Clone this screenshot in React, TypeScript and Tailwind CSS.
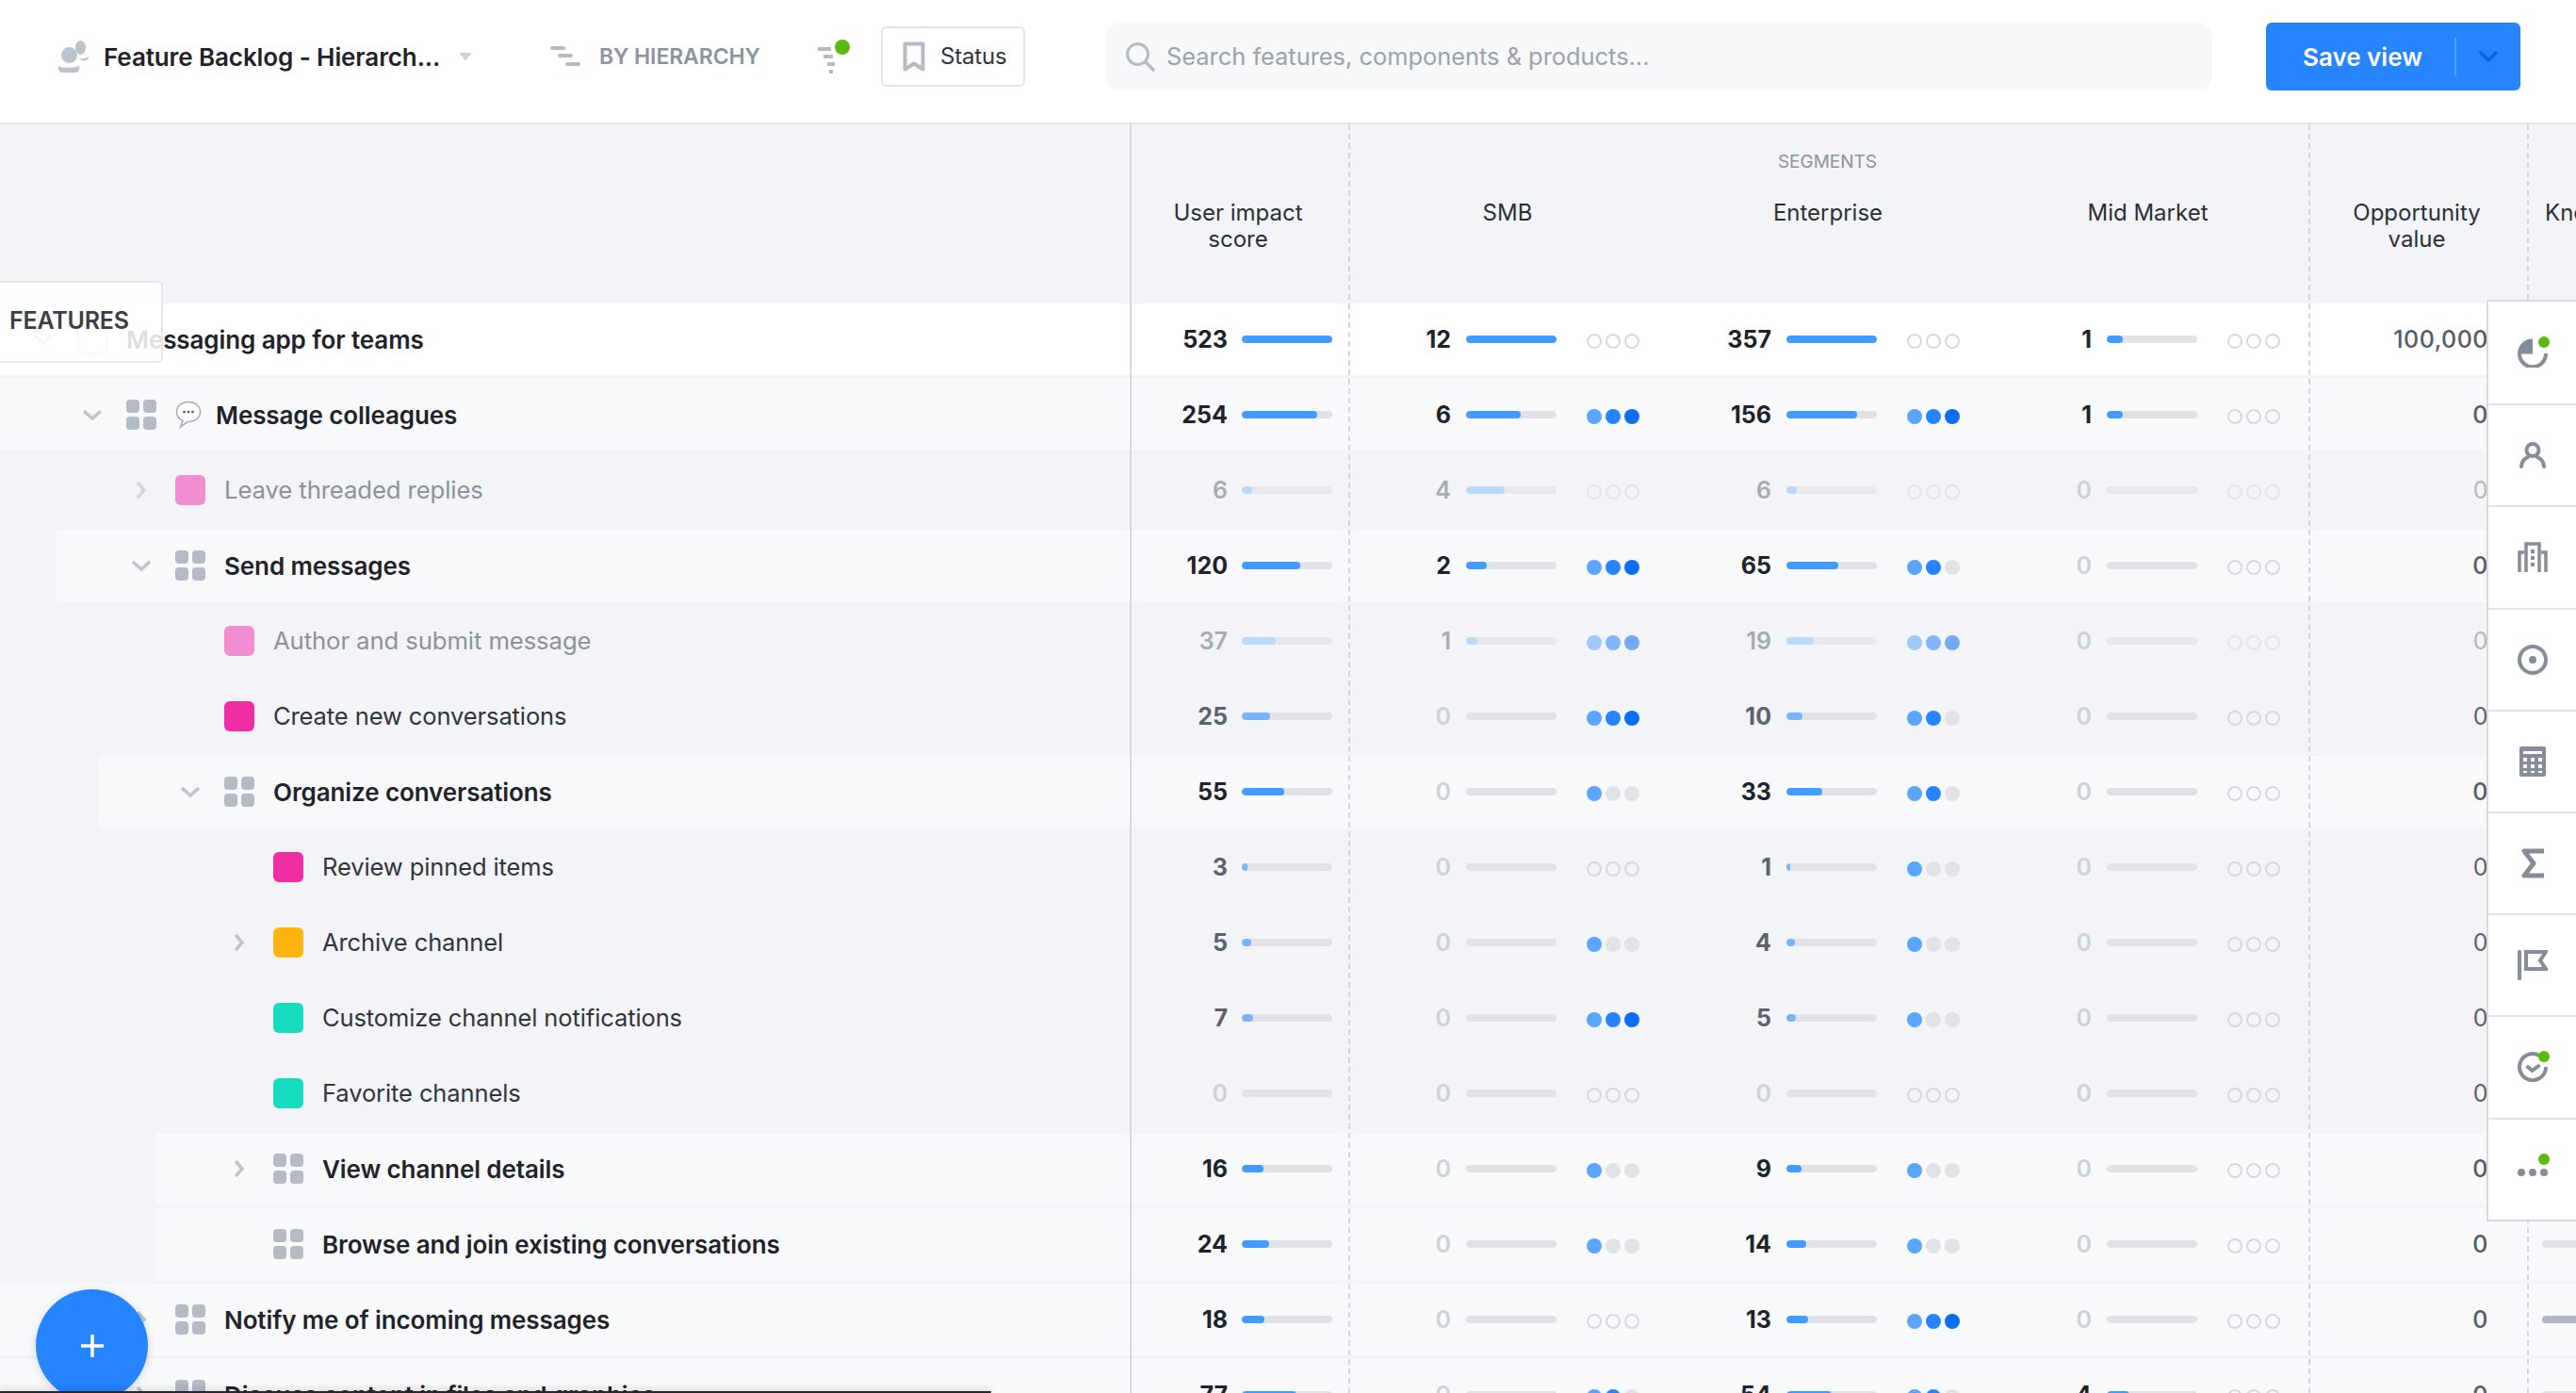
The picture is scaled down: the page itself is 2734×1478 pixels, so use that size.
import React from "react";

const DASH =
  "bg-[linear-gradient(#d3d7dc_62%,transparent_62%)] bg-[length:2px_10px] bg-repeat-y bg-[position:right_top]";
const GRID =
  "grid grid-cols-[1201px_232px_340px_340px_339px_232px_1fr]";

type Dots = 0 | 1 | 2 | 3;
type Seg = [string, number, Dots];
type Row = {
  label: string;
  level: number;
  kind: "group" | "leaf" | "dim" | "root";
  swatch?: string;
  chevron?: "down" | "right";
  emoji?: boolean;
  shade: number;
  impact: [string, number];
  segs: [Seg, Seg, Seg];
  opp: string;
  next?: string;
};

const zero: Seg = ["0", 0, 0];

const rows: Row[] = [
  { label: "Messaging app for teams", level: 0, kind: "root", chevron: "down", shade: 0, impact: ["523", 100], segs: [["12", 100, 0], ["357", 100, 0], ["1", 18, 0]], opp: "100,000" },
  { label: "Message colleagues", level: 1, kind: "group", chevron: "down", emoji: true, shade: 0, impact: ["254", 83], segs: [["6", 60, 3], ["156", 78, 3], ["1", 18, 0]], opp: "0" },
  { label: "Leave threaded replies", level: 2, kind: "dim", swatch: "bg-[#f08ecf]", chevron: "right", shade: 0, impact: ["6", 11], segs: [["4", 43, 0], ["6", 11, 0], zero], opp: "0" },
  { label: "Send messages", level: 2, kind: "group", chevron: "down", shade: 60, impact: ["120", 65], segs: [["2", 23, 3], ["65", 57, 2], zero], opp: "0" },
  { label: "Author and submit message", level: 3, kind: "dim", swatch: "bg-[#f08ecf]", shade: 0, impact: ["37", 38], segs: [["1", 12, 3], ["19", 30, 3], zero], opp: "0" },
  { label: "Create new conversations", level: 3, kind: "leaf", swatch: "bg-[#ef2ea6]", shade: 0, impact: ["25", 31], segs: [["0", 0, 3], ["10", 18, 2], zero], opp: "0" },
  { label: "Organize conversations", level: 3, kind: "group", chevron: "down", shade: 105, impact: ["55", 47], segs: [["0", 0, 1], ["33", 40, 2], zero], opp: "0" },
  { label: "Review pinned items", level: 4, kind: "leaf", swatch: "bg-[#ef2ea6]", shade: 0, impact: ["3", 6], segs: [["0", 0, 0], ["1", 4, 1], zero], opp: "0" },
  { label: "Archive channel", level: 4, kind: "leaf", swatch: "bg-[#ffb412]", chevron: "right", shade: 0, impact: ["5", 10], segs: [["0", 0, 1], ["4", 9, 1], zero], opp: "0" },
  { label: "Customize channel notifications", level: 4, kind: "leaf", swatch: "bg-[#17dcc0]", shade: 0, impact: ["7", 13], segs: [["0", 0, 3], ["5", 10, 1], zero], opp: "0" },
  { label: "Favorite channels", level: 4, kind: "leaf", swatch: "bg-[#17dcc0]", shade: 0, impact: ["0", 0], segs: [["0", 0, 0], ["0", 0, 0], zero], opp: "0" },
  { label: "View channel details", level: 4, kind: "group", chevron: "right", shade: 165, impact: ["16", 24], segs: [["0", 0, 1], ["9", 17, 1], zero], opp: "0" },
  { label: "Browse and join existing conversations", level: 4, kind: "group", shade: 165, impact: ["24", 30], segs: [["0", 0, 1], ["14", 22, 1], zero], opp: "0", next: "bg-[#dfe2e6]" },
  { label: "Notify me of incoming messages", level: 2, kind: "group", chevron: "right", shade: 0, impact: ["18", 25], segs: [["0", 0, 0], ["13", 24, 3], zero], opp: "0", next: "bg-[#b3b9c2]" },
  { label: "Discuss content in files and graphics", level: 2, kind: "group", chevron: "right", shade: 0, impact: ["77", 60], segs: [["0", 0, 2], ["54", 50, 2], ["4", 25, 0]], opp: "0", next: "bg-[#dfe2e6]" },
];

function GridIcon() {
  return (
    <div className="grid h-8 w-8 shrink-0 grid-cols-2 gap-[4px]">
      <span className="rounded-[4px] bg-[#b4bbc5]" />
      <span className="rounded-[4px] bg-[#b4bbc5]" />
      <span className="rounded-[4px] bg-[#b4bbc5]" />
      <span className="rounded-[4px] bg-[#b4bbc5]" />
    </div>
  );
}

function Chevron({ dir, light }: { dir: "down" | "right"; light?: boolean }) {
  return (
    <svg width="20" height="20" viewBox="0 0 20 20" fill="none" className={light ? "opacity-60" : ""}>
      {dir === "down" ? (
        <path d="M1 6l9 8 9-8" stroke="#bfc5cd" strokeWidth="3.6" />
      ) : (
        <path d="M6 2l7 8-7 8" stroke="#bfc5cd" strokeWidth="3.6" />
      )}
    </svg>
  );
}

function Bubble() {
  return (
    <svg width="28" height="30" viewBox="0 0 28 30" className="shrink-0">
      <path
        d="M14 1.500C7 1.500 1.500 6 1.500 12c0 4 2.500 7.500 6.500 9.300L5.500 28 13 22.500h1c7 0 12.500-4.500 12.500-10.500S21 1.500 14 1.500z"
        fill="#fff"
        stroke="#a9afb8"
        strokeWidth="1.600"
      />
      <circle cx="9.500" cy="12" r="1.300" fill="#4a4f57" />
      <circle cx="14" cy="12" r="1.300" fill="#4a4f57" />
      <circle cx="18.500" cy="12" r="1.300" fill="#4a4f57" />
    </svg>
  );
}

function DotSet({ n, faded }: { n: Dots; faded: boolean }) {
  const filled = ["bg-[#5aa5ff]", "bg-[#2684ff]", "bg-[#0b6ef2]"];
  return (
    <div className={`ml-8 mt-[4px] flex w-[56px] shrink-0 gap-[4px] ${faded ? "opacity-55" : ""}`}>
      {[0, 1, 2].map((i) => {
        let cls = "border-2 border-[#d5d9de]";
        if (n > 0) cls = i < n ? filled[i] : "bg-[#dfe2e6]";
        return <span key={i} className={`h-4 w-4 rounded-full ${cls}`} />;
      })}
    </div>
  );
}

function Bar({ pct, kind }: { pct: number; kind: Row["kind"] }) {
  const fill =
    kind === "dim" ? "bg-[#b9d9fb]" : kind === "leaf" ? "bg-[#7ab4f8]" : "bg-[#429bff]";
  return (
    <div className={`h-2 w-24 shrink-0 overflow-hidden rounded-full ${kind === "dim" ? "bg-[#e6e8ec]" : "bg-[#dfe3e6]"}`}>
      {pct > 0 && <div className={`h-full rounded-full ${fill}`} style={{ width: `${pct}%` }} />}
    </div>
  );
}

function numClass(v: string, kind: Row["kind"]) {
  if (v === "0") return "font-semibold text-[#cdd2d8]";
  if (kind === "dim") return "font-semibold text-[#a6acb3]";
  if (kind === "leaf") return "font-bold text-[#5b626c]";
  return "font-bold text-[#1f2329]";
}

function RowView({ r }: { r: Row }) {
  const rowBg = r.kind === "root" ? "#ffffff" : r.kind === "group" ? "#f8f9fb" : "#f2f4f7";
  const labelCls =
    r.kind === "group" || r.kind === "root"
      ? "text-[26px] font-semibold text-[#1f2329]"
      : r.kind === "dim"
        ? "text-[25.7px] text-[#8b929c]"
        : "text-[25.5px] text-[#30353c]";
  return (
    <div
      className={`${GRID} h-20 shadow-[inset_0_-4px_0_#f2f4f7]`}
      style={{ backgroundImage: `linear-gradient(to right, #f2f4f7 ${r.shade}px, ${rowBg} ${r.shade}px)` }}
    >
      <div
        className="flex items-center border-r-2 border-[#d5d9de] pb-1"
        style={{ paddingLeft: 36 + 52 * r.level }}
      >
        <div className="mr-[26px] flex w-5 shrink-0 justify-center">
          {r.chevron && <Chevron dir={r.chevron} light={r.kind === "dim"} />}
        </div>
        {r.swatch ? (
          <span className={`h-8 w-8 shrink-0 rounded-[6px] ${r.swatch}`} />
        ) : r.kind === "root" ? (
          <span className="h-8 w-8 shrink-0 rounded-[6px] border-2 border-[#c9ced5]" />
        ) : (
          <GridIcon />
        )}
        {r.emoji && (
          <span className="ml-5">
            <Bubble />
          </span>
        )}
        <span className={`${r.emoji ? "ml-[15px]" : "ml-5"} whitespace-nowrap tracking-[-0.1px] ${labelCls}`}>
          {r.label}
        </span>
      </div>
      <div className={`flex items-center pb-1 ${DASH}`}>
        <span className={`mt-[1px] w-[102px] shrink-0 text-right text-[25px] ${numClass(r.impact[0], r.kind)}`}>{r.impact[0]}</span>
        <div className="ml-[15px]">
          <Bar pct={r.impact[1]} kind={r.kind} />
        </div>
      </div>
      {r.segs.map((s, i) => (
        <div key={i} className={`flex items-center pb-1 ${i === 2 ? DASH : ""}`}>
          <span className={`mt-[1px] w-[107px] shrink-0 text-right text-[25px] ${numClass(s[0], r.kind)}`}>{s[0]}</span>
          <div className="ml-4">
            <Bar pct={s[1]} kind={r.kind} />
          </div>
          <DotSet n={s[2]} faded={r.kind === "dim"} />
        </div>
      ))}
      <div className={`flex items-center justify-end pb-1 pr-[43px] ${DASH}`}>
        <span className={`mt-[1px] text-[25px] tracking-[0.5px] ${r.kind === "dim" ? "font-normal text-[#b3b8bf]" : r.kind === "leaf" ? "font-normal text-[#5b626c]" : "font-medium text-[#555c66]"}`}>
          {r.opp}
        </span>
      </div>
      <div className="flex items-center pb-1 pl-[14px]">
        {r.next && <span className={`h-2 w-24 rounded-full ${r.next}`} />}
      </div>
    </div>
  );
}

function Cell({ children, dot }: { children: React.ReactNode; dot?: boolean }) {
  return (
    <div className="relative flex h-[108.2px] items-center justify-center border-t-2 border-[#dfe3e8] first:border-t-0">
      <span className="relative flex h-9 w-9 items-center justify-center">
        {children}
        {dot && <span className="absolute right-0 top-[1px] h-3 w-3 rounded-full bg-[#5cb90d]" />}
      </span>
    </div>
  );
}

const G = "#858d99";

export default function App() {
  return (
    <div className="relative h-[1478px] w-[2734px] overflow-hidden bg-[#f2f4f7] [font-family:Inter,sans-serif]">
      <header className="flex h-[132px] items-center border-b-2 border-[#e3e6ea] bg-white pb-[10px] pl-[62px]">
        <svg width="32" height="34" viewBox="0 0 32 34" className="shrink-0">
          <circle cx="11.500" cy="15.500" r="8.500" fill="#bcc3cd" />
          <path d="M0 27c3 1.500 6 1.800 11 1.800s8-.5 11-2c1 3.500-1 7.200-4 7.200H4c-3 0-5-3-4-7z" fill="#bcc3cd" />
          <ellipse cx="23.500" cy="7.500" rx="5.500" ry="7.500" fill="#bcc3cd" />
          <path d="M23 19c3 .5 6 0 9-2 .5 3-2 4.500-5 4.500-2 0-4-1-4-2.500z" fill="#bcc3cd" />
        </svg>
        <span className="ml-4 w-[355px] shrink-0 whitespace-nowrap text-[26px] font-semibold tracking-[-0.1px] text-[#1f2329]">
          Feature Backlog - Hierarch...
        </span>
        <svg width="14" height="10" viewBox="0 0 14 10" className="ml-[22px] shrink-0">
          <path d="M1 1.500h12L7 9z" fill="#d0d4da" stroke="#d0d4da" strokeLinejoin="round" />
        </svg>
        <svg width="32" height="22" viewBox="0 0 32 22" className="ml-[83px] shrink-0">
          <rect x="0" y="0" width="16" height="4" rx="2" fill="#b4bbc5" />
          <rect x="8" y="8" width="16" height="4" rx="2" fill="#b4bbc5" />
          <rect x="16" y="17" width="16" height="4" rx="2" fill="#b4bbc5" />
        </svg>
        <span className="ml-5 w-[172px] shrink-0 whitespace-nowrap text-[23px] font-semibold tracking-[-0.1px] text-[#8b939f]">
          BY HIERARCHY
        </span>
        <svg width="36" height="36" viewBox="0 0 36 36" className="ml-[60px] shrink-0">
          <rect x="0" y="8" width="14" height="4" fill="#b4bbc5" />
          <rect x="6" y="16" width="10" height="4" fill="#b4bbc5" />
          <rect x="10" y="24" width="8" height="4" fill="#b4bbc5" />
          <rect x="12" y="32" width="4" height="4" fill="#b4bbc5" />
          <circle cx="26" cy="8" r="8" fill="#5cb90d" />
        </svg>
        <div className="ml-[31px] flex h-16 w-[153px] shrink-0 items-center rounded-md border-2 border-[#e0e4e9] pl-[21px]">
          <svg width="24" height="32" viewBox="0 0 24 32" className="shrink-0">
            <path d="M2.500 2.500h19v27l-9.500-6-9.500 6z" fill="none" stroke="#b4bbc5" strokeWidth="4" strokeLinejoin="round" />
          </svg>
          <span className="ml-4 text-[24px] tracking-[-0.2px] text-[#30353c]">Status</span>
        </div>
        <div className="ml-[85px] flex h-[72px] w-[1175px] shrink-0 items-center rounded-2xl bg-[#f7f8fa] pl-[21px]">
          <svg width="32" height="32" viewBox="0 0 32 32" fill="none" className="shrink-0">
            <circle cx="13.500" cy="13.500" r="11" stroke="#b4bbc5" strokeWidth="3" />
            <path d="M22 22l8 8" stroke="#b4bbc5" strokeWidth="3.500" strokeLinecap="round" />
          </svg>
          <span className="ml-3 whitespace-nowrap text-[25.4px] text-[#9aa2ad]">
            Search features, components &amp; products...
          </span>
        </div>
        <div className="ml-[57px] flex h-[72px] w-[270px] shrink-0 items-center rounded-md bg-[#2684ff] pl-[39px]">
          <span className="w-[161px] shrink-0 whitespace-nowrap text-[26px] font-semibold text-white">Save view</span>
          <span className="h-10 w-[2px] bg-[#5aa2ff]" />
          <svg width="22" height="14" viewBox="0 0 22 14" fill="none" className="ml-[23px]">
            <path d="M2 2l9 9 9-9" stroke="#0f66d9" strokeWidth="3.500" />
          </svg>
        </div>
      </header>

      <div className={`${GRID} h-[190px] text-[24px] leading-[28px] text-[#2a2f36]`}>
        <div className="border-r-2 border-[#d5d9de]" />
        <div className={`pr-[6px] pt-20 text-center ${DASH} bg-[position:right_3px]`}>
          User impact
          <br />
          score
        </div>
        <div className="col-span-3">
          <div className={`h-full ${DASH} bg-[position:right_3px]`}>
            <div className="pr-[6px] pt-[29px] text-center text-[19px] leading-[22px] text-[#8b939f]">SEGMENTS</div>
            <div className="mt-[29px] grid grid-cols-[340px_340px_339px] text-center">
              <div className="pr-[6px]">SMB</div>
              <div className="pr-[6px]">Enterprise</div>
              <div className="pr-[6px]">Mid Market</div>
            </div>
          </div>
        </div>
        <div className={`pr-[6px] pt-20 text-center ${DASH} bg-[position:right_3px]`}>
          Opportunity
          <br />
          value
        </div>
        <div className="overflow-hidden whitespace-nowrap pl-[17px] pt-20">Known</div>
      </div>

      <div>
        {rows.map((r) => (
          <RowView key={r.label} r={r} />
        ))}
      </div>

      {/* FEATURES tab lying over the first row */}
      <div className="absolute left-0 top-[298px] flex h-[87px] w-[173px] items-center rounded-r-md border-2 border-l-0 border-[#e3e6ea] bg-white/85 pb-[1px] pl-[10px]">
        <span className="text-[25px] font-semibold tracking-[-0.2px] text-[#3a3f46]">FEATURES</span>
      </div>

      {/* Right tool rail */}
      <div className="absolute left-[2639px] top-[318px] w-[95px] border-y-2 border-l-2 border-[#d5dae0] bg-white">
        <Cell dot>
          <svg width="32" height="32" viewBox="0 0 32 32" fill="none">
            <path d="M14 3.500A14 14 0 1 0 30 17" stroke={G} strokeWidth="4" />
            <path d="M16 1.500v16H2C2.300 9 8 2 16 1.500z" fill={G} />
          </svg>
        </Cell>
        <Cell>
          <svg width="28" height="28" viewBox="0 0 28 28" fill="none">
            <circle cx="14" cy="8.500" r="6.500" stroke={G} strokeWidth="4" />
            <path d="M2 26c0-5 3-8 7-10M26 26c0-5-3-8-7-10" stroke={G} strokeWidth="4" strokeLinecap="round" />
          </svg>
        </Cell>
        <Cell>
          <svg width="32" height="32" viewBox="0 0 32 32" fill="none">
            <path d="M9 32V2h14v30" stroke={G} strokeWidth="3.500" />
            <path d="M2 32V11h5M30 32V11h-5" stroke={G} strokeWidth="3.500" />
            <rect x="14" y="8" width="4" height="4" fill={G} />
            <rect x="14" y="15" width="4" height="4" fill={G} />
            <rect x="14" y="22" width="4" height="4" fill={G} />
          </svg>
        </Cell>
        <Cell>
          <svg width="32" height="32" viewBox="0 0 32 32" fill="none">
            <circle cx="16" cy="16" r="14" stroke={G} strokeWidth="4" />
            <circle cx="16" cy="16" r="4" fill={G} />
          </svg>
        </Cell>
        <Cell>
          <svg width="28" height="32" viewBox="0 0 28 32" fill={G}>
            <path
              fillRule="evenodd"
              d="M2 0h24a2 2 0 0 1 2 2v28a2 2 0 0 1-2 2H2a2 2 0 0 1-2-2V2a2 2 0 0 1 2-2zM4 5v3h20V5zM4 12v4h4v-4zM12 12v4h4v-4zM20 12v4h4v-4zM4 19v4h4v-4zM12 19v4h4v-4zM20 19v4h4v-4zM4 26v2h4v-2zM12 26v2h4v-2zM20 26v2h4v-2z"
            />
          </svg>
        </Cell>
        <Cell>
          <svg width="24" height="32" viewBox="0 0 24 32" fill="none">
            <path d="M24 3H3l10 13L3 29h21" stroke={G} strokeWidth="5" strokeLinejoin="round" />
          </svg>
        </Cell>
        <Cell>
          <svg width="32" height="32" viewBox="0 0 32 32" fill="none">
            <rect x="0" y="0" width="4" height="32" rx="1.500" fill={G} />
            <path d="M9 2h21l-6 9 6 9H9z" stroke={G} strokeWidth="4" />
          </svg>
        </Cell>
        <Cell dot>
          <svg width="32" height="32" viewBox="0 0 32 32" fill="none">
            <path d="M23 4A14 14 0 1 0 30 16" stroke={G} strokeWidth="4" />
            <path d="M9.500 15l6 5 8-6" stroke={G} strokeWidth="4" />
          </svg>
        </Cell>
        <Cell dot>
          <svg width="32" height="8" viewBox="0 0 32 8" fill={G} className="mt-[6px]">
            <circle cx="4" cy="4" r="4" />
            <circle cx="16" cy="4" r="4" />
            <circle cx="28" cy="4" r="4" />
          </svg>
        </Cell>
      </div>

      {/* Floating add button */}
      <div className="absolute left-[38px] top-[1368px] flex h-[119px] w-[119px] items-center justify-center rounded-full bg-[#2684ff] shadow-[0_2px_10px_rgba(0,0,0,0.15)]">
        <svg width="24" height="24" viewBox="0 0 24 24" fill="none">
          <path d="M12 0v24M0 12h24" stroke="#fff" strokeWidth="3.500" />
        </svg>
      </div>
      <div className="absolute bottom-0 left-0 h-[2px] w-[1052px] rounded-r-full bg-[#23272e] shadow-[0_-2px_6px_rgba(0,0,0,0.25)]" />
    </div>
  );
}
